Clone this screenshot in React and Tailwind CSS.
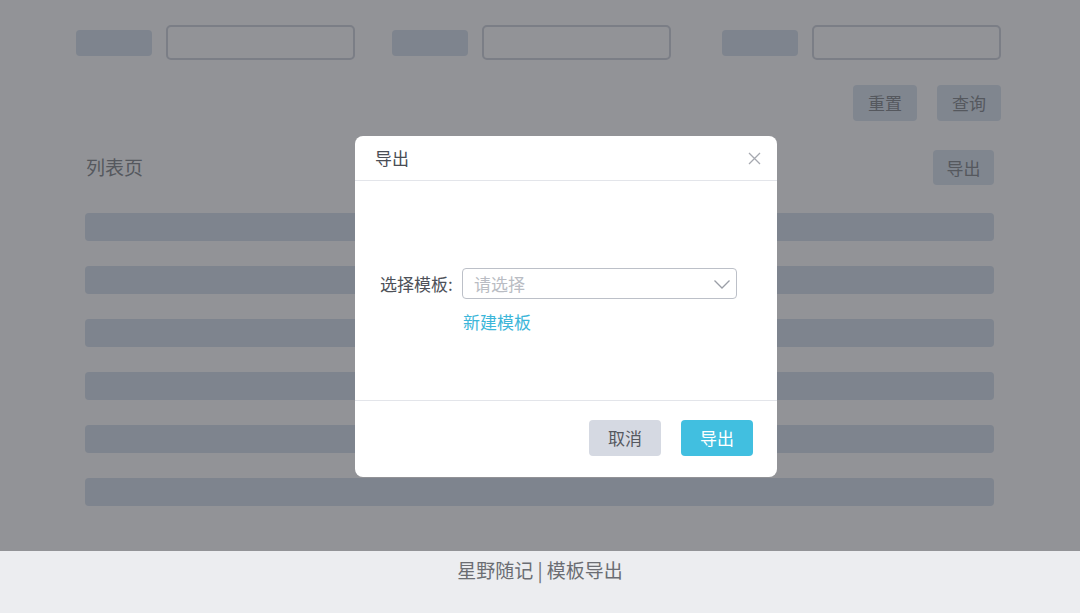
import React from "react";

const font = { fontFamily: '"Noto Sans CJK SC", "Noto Sans", sans-serif' };

function FilterGroup({ className = "" }) {
  return (
    <div className={`flex items-center ${className}`}>
      <div className="w-[76px] h-[26px] rounded-[4px] bg-[#7e848e]" />
      <div className="ml-[14px] w-[189px] h-[35px] rounded-[5px] border-2 border-[#7b7e86]" />
    </div>
  );
}

export default function App() {
  return (
    <div className="w-[1080px] h-[613px] flex flex-col overflow-hidden" style={font}>
      <div className="relative h-[551px] bg-[#929397]">
        {/* filter row */}
        <div className="flex items-center pt-[25px] pl-[76px]">
          <FilterGroup />
          <FilterGroup className="ml-[37px]" />
          <FilterGroup className="ml-[51px]" />
        </div>
        <div className="flex justify-end gap-[20px] pr-[79px] mt-[25px]">
          <div className="w-[64px] h-[36px] rounded-[4px] bg-[#80868f] flex items-center justify-center text-[17px] text-[#55585e]">重置</div>
          <div className="w-[64px] h-[36px] rounded-[4px] bg-[#80868f] flex items-center justify-center text-[17px] text-[#55585e]">查询</div>
        </div>
        <div className="flex items-center justify-between pl-[86px] pr-[86px] mt-[29px]">
          <div className="text-[19px] text-[#55585e]">列表页</div>
          <div className="w-[61px] h-[35px] rounded-[4px] bg-[#80868f] flex items-center justify-center text-[17px] text-[#55585e]">导出</div>
        </div>
        <div className="flex flex-col gap-[25px] pl-[85px] pr-[86px] mt-[28px]">
          {[0, 1, 2, 3, 4, 5].map((i) => (
            <div key={i} className="h-[28px] rounded-[4px] bg-[#7e848e]" />
          ))}
        </div>

        {/* modal */}
        <div className="absolute left-[355px] top-[136px] w-[422px] h-[341px] bg-white rounded-[8px] flex flex-col">
          <div className="h-[45px] border-b border-[#e3e5ea] flex items-center justify-between pl-[20px] pr-[16px]">
            <span className="text-[17px] text-[#4a4d55]">导出</span>
            <svg width="13" height="13" viewBox="0 0 13 13">
              <path d="M1 1 L12 12 M12 1 L1 12" stroke="#a6a9b0" strokeWidth="1.3" fill="none" />
            </svg>
          </div>
          <div className="h-[220px] border-b border-[#e3e5ea] pl-[25px] pt-[87px]">
            <div className="flex items-center">
              <span className="text-[17px] text-[#4e5158] w-[82px]">选择模板:</span>
              <div className="w-[275px] h-[31px] rounded-[4px] border border-[#bcc0c8] flex items-center justify-between pl-[11px] pr-[5px]">
                <span className="text-[17px] text-[#b9bcc3]">请选择</span>
                <svg width="18" height="12" viewBox="0 0 18 12">
                  <path d="M1.5 2.5 L9 10 L16.5 2.5" stroke="#9a9ea6" strokeWidth="1.3" fill="none" />
                </svg>
              </div>
            </div>
            <div className="ml-[83px] mt-[10px] text-[17px] text-[#3cb6d9]">新建模板</div>
          </div>
          <div className="flex-1 flex items-start justify-end gap-[20px] pr-[24px] pt-[19px]">
            <div className="w-[72px] h-[36px] rounded-[4px] bg-[#d5d9e2] flex items-center justify-center text-[17px] text-[#55585f]">取消</div>
            <div className="w-[72px] h-[36px] rounded-[4px] bg-[#41bfe0] flex items-center justify-center text-[17px] text-white">导出</div>
          </div>
        </div>
      </div>
      <div className="flex-1 bg-[#ecedf0] flex justify-center pt-[5px]">
        <span className="text-[19px] text-[#6b6d73]">星野随记 | 模板导出</span>
      </div>
    </div>
  );
}
